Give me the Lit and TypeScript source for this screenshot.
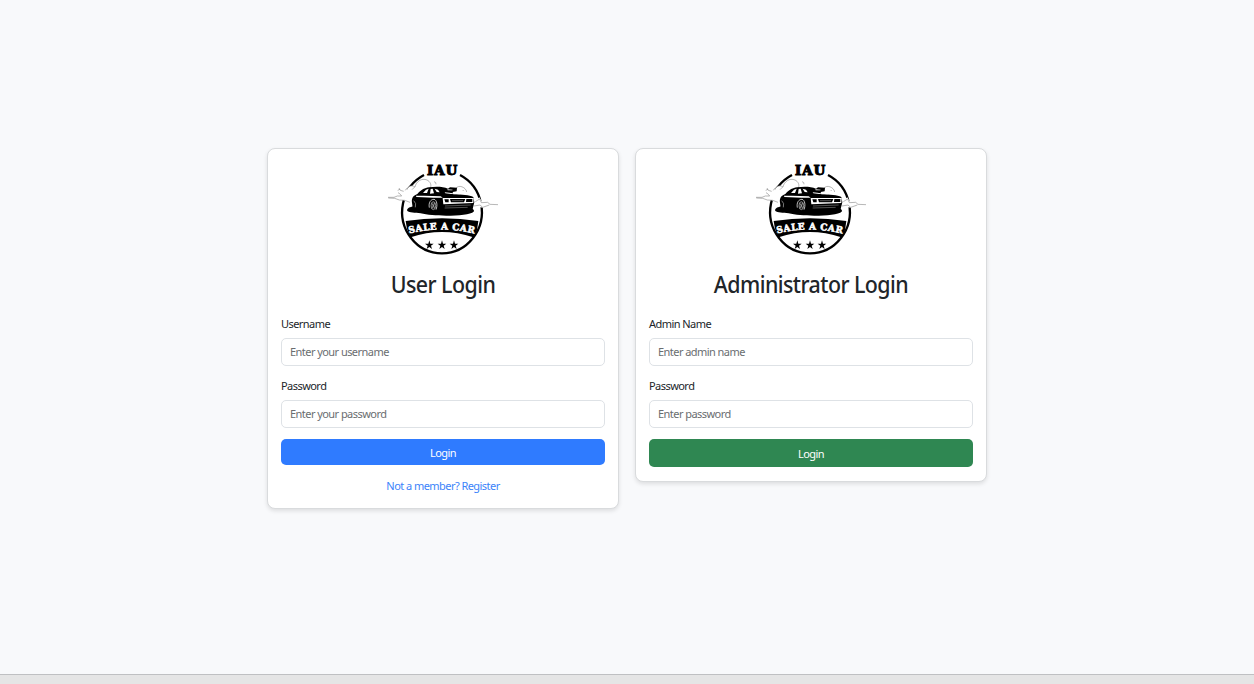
import { LitElement, html, css, nothing } from "lit";
import { customElement, property } from "lit/decorators.js";

@customElement("car-logo")
class CarLogo extends LitElement {
  static styles = css`
    :host { display: block; height: 105px; }
    svg { display: block; margin: 0 auto; }
    text { font-family: "DejaVu Serif", serif; font-weight: 700; font-stretch: 75%; }
  `;
  render() {
    return html`<svg width="124" height="105" viewBox="3 0 372 315">
      <path d="M132 60A119.500 124.300 0 1 0 240 60" fill="none" stroke="#000" stroke-width="7" />
      <text x="141" y="59" font-size="38" letter-spacing="3" textLength="94" lengthAdjust="spacingAndGlyphs" stroke="#000" stroke-width="3">IAU</text>
      <g fill="#fff" stroke="#777" stroke-width="1.600">
        <path d="M40 129L56 122L60 104L70 109L82 103C86 92 96 90 105 94C112 78 125 70 140 74C152 78 158 90 151 101L110 120L96 144C86 138 78 141 70 136L50 131Z" stroke="none" />
        <path d="M24 127L42 127L52 123L65 123L59 116L54 113M53 106L60 103M57 99L61 106L71 109M76 106C84 93 95 89 105 96C108 80 125 68 141 75C151 80 155 89 151 99M104 96L96 104M162 80q7 1 6 8M25 129L44 130L58 135L74 136L90 142" fill="none" />
        <path d="M278 144L298 127L308 143L330 147L354 149L330 151L310 158L295 156Z" stroke="none" />
        <path d="M228 100C235 88 258 96 260 111M248 105l3 3M286 140L299 132L304 143L323 142L330 148L354 149M282 153L300 150L308 157L328 150" fill="none" />
      </g>
      <path d="M82 168C78 160 92 156 100 154L250 154C272 158 286 163 281 170C266 184 165 186 122 175C105 173 88 173 82 168Z" />
      <path d="M96 143C94 130 99 122 112 117C125 103 134 99 147 97C170 94 189 95 204 101L210 97L231 98L230 109L218 111L220 118C246 118 268 121 280 126L283 142L278 162C251 173 218 172 187 173L155 168L107 165L98 158Z" />
      <g fill="#fff">
        <path d="M129 114L138 104L146 101L141 114ZM152 102L158 101L162 115L150 116ZM164 101L174 104L179 112L170 111Z" />
        <path d="M108 122L132 122L182 124L188 128L160 128L109 126Z" />
        <path d="M194 112l14 1 10 2 18 1 4 2-26-1-18-2ZM202 103l16 1-1 2-14 0Z" />
        <path d="M188 129H281L280 144L190 148Z" />
      </g>
      <path d="M193 133H206V142H196ZM210 132H256L252 142H213ZM259 132H277V141H258Z" />
      <path d="M216 137H249M195 153L272 150M194 159L263 157" stroke="#999" stroke-width="1.600" />
      <path d="M148 158C145 143 152 133 162 133C171 135 173 151 168 164" fill="none" stroke="#fff" stroke-width="2.200" />
      <ellipse cx="160" cy="152" rx="7" ry="12" fill="#222" stroke="#bbb" stroke-width="2" />
      <path d="M156 145L164 160M164 144L156 160M101 137Q110 144 106 157" fill="none" stroke="#ddd" stroke-width="1.600" />
      <path d="M77 198Q186 181 295 198L291 226L280 247Q186 215 92 247L81 222Z" />
      <path id="banner-line" d="M88 236Q186 211 287 237" fill="none" />
      <text font-size="28" letter-spacing="1.5" fill="#fff" stroke="#fff" stroke-width="1.600"><textPath href="#banner-line" textLength="198" lengthAdjust="spacingAndGlyphs">SALE A CAR</textPath></text>
      ${[148, 186, 222].map(
        (x) => html`<svg x=${x - 13} y="256" width="26" height="27" viewBox="0 0 26 27" overflow="visible"><path d="M13 0L16 10H26L18 16L21 26L13 20L5 26L8 16L0 10H10Z" /></svg>`
      )}
    </svg>`;
  }
}

@customElement("login-card")
class LoginCard extends LitElement {
  @property() heading = "";
  @property() nameLabel = "";
  @property() namePlaceholder = "";
  @property() passwordPlaceholder = "";
  @property() variant = "user";

  static styles = css`
    :host { display: block; }
    .card {
      box-sizing: border-box; width: 352px; padding: 6px 13px 14px;
      border: 1px solid #d9dbdd; border-radius: 8px; background: #fff;
      box-shadow: 0 2px 4px rgba(0, 0, 0, 0.11);
    }
    .user { padding-bottom: 13px; }
    h2 {
      margin: 6px 0 13px; height: 36px; line-height: 36px; text-align: center;
      font-size: 23.5px; font-weight: 500; letter-spacing: -0.6px; white-space: nowrap; color: #212529;
      transform: scaleX(0.91);
    }
    label { display: block; height: 18px; line-height: 18px; margin-bottom: 5px; color: #212529; }
    input {
      display: block; box-sizing: border-box; width: 324px; height: 28px; margin: 0 0 11px; padding: 0 8px 1px;
      border: 1px solid #dee2e6; border-radius: 5px; background: #fff;
      font: inherit; letter-spacing: inherit; color: #212529; outline: none;
    }
    input::placeholder { color: #6a6d70; opacity: 1; }
    button {
      display: block; width: 324px; height: 26px; padding: 1px 0 0; border: 0; border-radius: 5px;
      background: #2f7bff; color: #fff; font: inherit; letter-spacing: inherit;
    }
    .admin button { height: 28px; background: #2f8752; }
    a { display: block; margin: 12px 0 0; height: 18px; line-height: 18px; text-align: center; color: #3c83fa; text-decoration: none; }
  `;
  render() {
    return html`<div class="card ${this.variant}">
      <car-logo></car-logo>
      <h2>${this.heading}</h2>
      <label for="name">${this.nameLabel}</label>
      <input id="name" placeholder=${this.namePlaceholder} />
      <label for="password">Password</label>
      <input id="password" type="password" placeholder=${this.passwordPlaceholder} />
      <button>Login</button>
      ${this.variant === "user" ? html`<a href="#">Not a member? Register</a>` : nothing}
    </div>`;
  }
}

@customElement("app-root")
class AppRoot extends LitElement {
  static styles = css`
    :host {
      display: flex; flex-direction: column; height: 684px; background: #f8f9fb;
      font: 11px/18px "Noto Sans", "Open Sans", sans-serif; letter-spacing: -0.55px;
    }
    main { flex: 1; display: flex; justify-content: center; align-items: flex-start; gap: 16px; padding-top: 148px; }
    footer { box-sizing: border-box; height: 10px; border-top: 1px solid #bfc0c2; background: #e5e5e5; }
  `;
  render() {
    return html`<main>
        <login-card heading="User Login" .nameLabel=${"Username"} .namePlaceholder=${"Enter your username"} .passwordPlaceholder=${"Enter your password"}></login-card>
        <login-card heading="Administrator Login" variant="admin" .nameLabel=${"Admin Name"} .namePlaceholder=${"Enter admin name"} .passwordPlaceholder=${"Enter password"}></login-card>
      </main>
      <footer></footer>`;
  }
}
